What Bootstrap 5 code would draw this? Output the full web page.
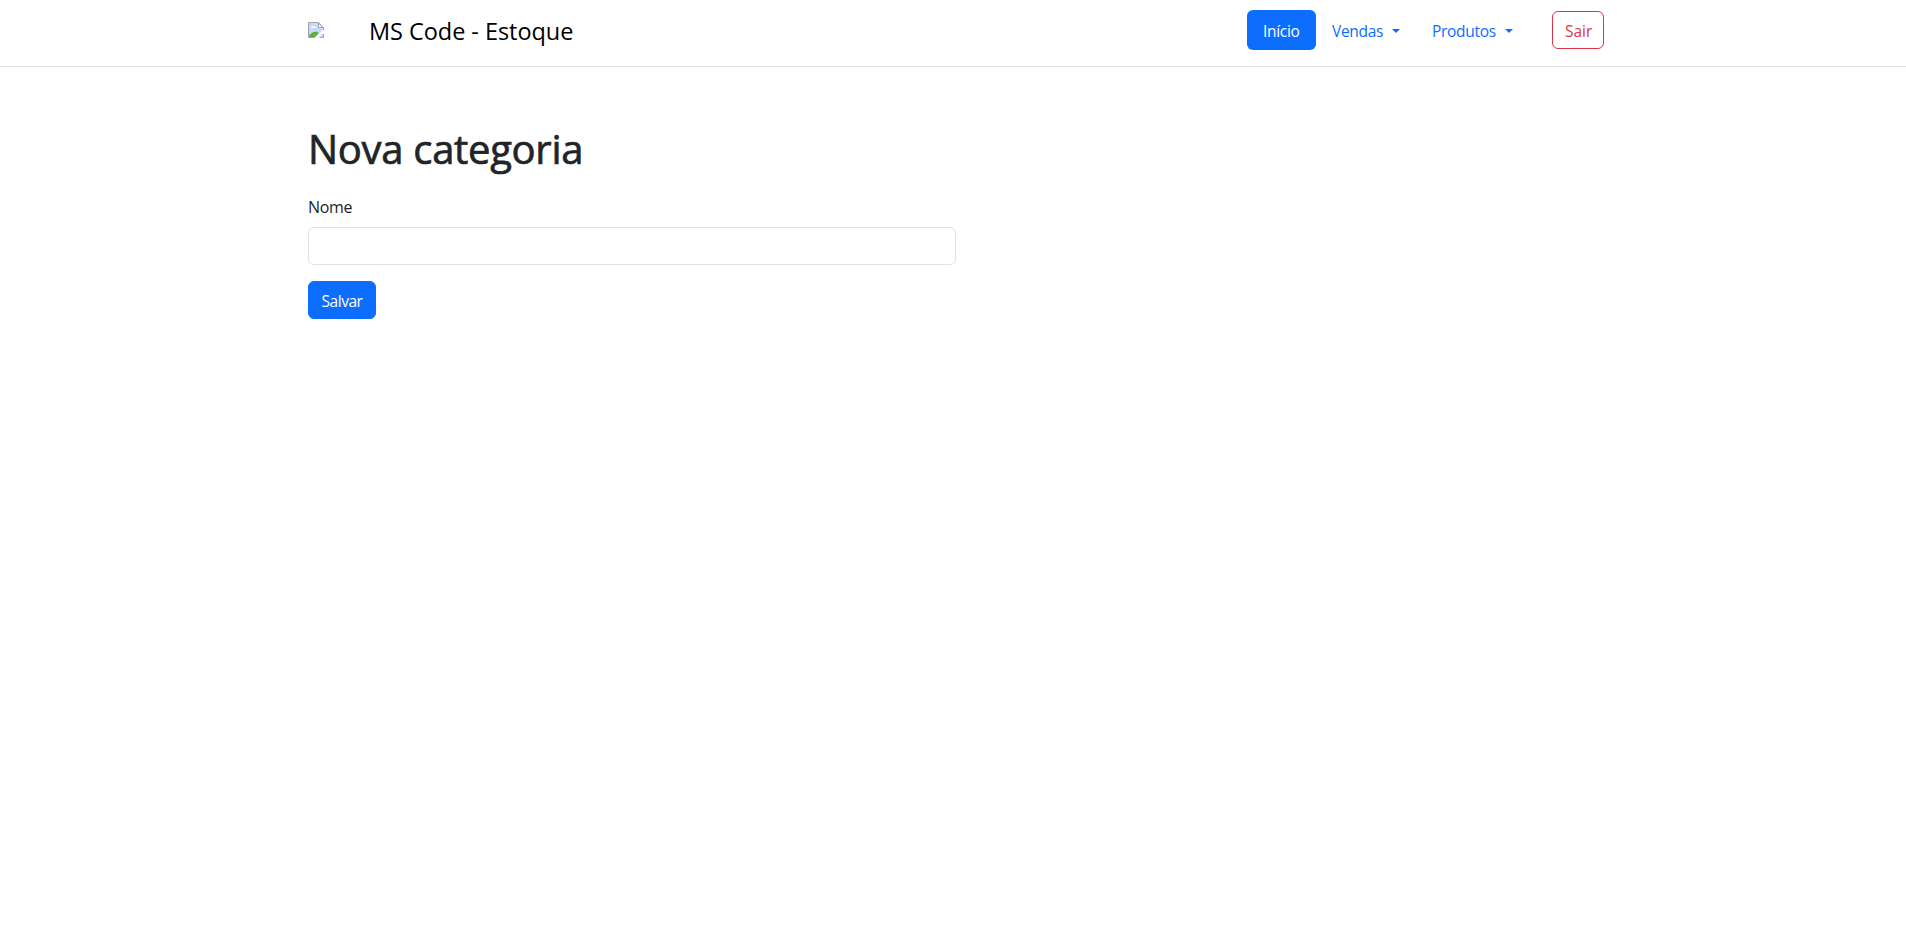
<!DOCTYPE html>
<html lang="pt-br">
<head>
    <meta charset="UTF-8">
    <meta name="viewport" content="width=device-width, initial-scale=1.0">
    <title>MS Code - Estoque</title>
    <link href="https://cdn.jsdelivr.net/npm/bootstrap@5.3.0/dist/css/bootstrap.min.css" rel="stylesheet">
    <style>
        body {
            font-family: "Segoe UI", "Open Sans", "Noto Sans", sans-serif;
            letter-spacing: -0.3px;
        }
        .container {
            transform: translateX(3px);
        }
        .topo {
            height: 67px;
            padding-top: 10px;
        }
        .marca {
            height: 40px;
            color: #000;
        }
        .logo {
            width: 16px;
            height: 16px;
            margin: 12px 45px 0 0;
        }
        .marca-nome {
            font-size: 23.5px;
            line-height: 43px;
            letter-spacing: -0.05px;
        }
        .menu .nav-link {
            height: 40px;
            font-size: 15.5px;
            line-height: 26px;
            white-space: nowrap;
        }
        .menu .dropdown-toggle::after {
            margin-left: 5px;
            border-width: 4.8px 4.8px 0;
        }
        .link-inicio { width: 69px; }
        .link-vendas { width: 100px; }
        .link-produtos { width: 112px; }
        .btn-sair,
        .btn-salvar {
            height: 38px;
            font-size: 15.5px;
            line-height: 26px;
        }
        .btn-sair { width: 52px; }
        .btn-salvar {
            width: 68px;
            letter-spacing: -0.45px;
        }
        .titulo {
            font-size: 40px;
            letter-spacing: -0.3px;
            -webkit-text-stroke: 0.7px;
            margin: 10px 0 22px;
        }
    </style>
</head>
<body>

<header class="topo border-bottom">
    <div class="container d-flex">
        <a href="#" class="marca d-flex me-auto text-decoration-none">
            <svg class="logo" viewBox="0 0 16 16">
                <path d="M1 1h10l4 4v10H1z" fill="#c6d9f8"/>
                <path d="M3 6c0-2 2-2 2.500-1C6 3 8 4 8 6z" fill="#fff"/>
                <path d="M1 15v-1c2-3 5-5 8-4l2 1-4 4z" fill="#5ab035"/>
                <path d="M6.500 16L16 7v3l-6 6z" fill="#fff"/>
                <path d="M.5 15.500V.5h10l5 5V8M.5 15.500H7M11.500 15.500h4V12" fill="none" stroke="#a3a3a3"/>
                <path d="M10.500 1v4.500H15z" fill="#fff" stroke="#a3a3a3"/>
            </svg>
            <span class="marca-nome">MS Code - Estoque</span>
        </a>
        <ul class="nav nav-pills menu">
            <li class="nav-item"><a href="#" class="nav-link active link-inicio">Início</a></li>
            <li class="nav-item dropdown">
                <a href="#" class="nav-link dropdown-toggle link-vendas" data-bs-toggle="dropdown">Vendas </a>
            </li>
            <li class="nav-item dropdown">
                <a href="#" class="nav-link dropdown-toggle link-produtos" data-bs-toggle="dropdown">Produtos </a>
            </li>
        </ul>
        <button type="button" class="btn btn-outline-danger btn-sair ms-4 align-self-center">Sair</button>
    </div>
</header>

<main class="container pt-5">
    <h1 class="titulo">Nova categoria</h1>
    <form>
        <div class="w-50 mb-3">
            <label for="nome" class="form-label">Nome</label>
            <input type="text" id="nome" class="form-control">
        </div>
        <button type="submit" class="btn btn-primary btn-salvar">Salvar</button>
    </form>
</main>

<script src="https://cdn.jsdelivr.net/npm/bootstrap@5.3.0/dist/js/bootstrap.bundle.min.js"></script>
</body>
</html>
